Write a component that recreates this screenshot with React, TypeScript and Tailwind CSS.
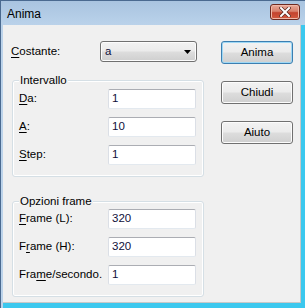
import React from 'react';

const font = { fontFamily: '"Liberation Sans", Arial, sans-serif' };

function Field({ label, value, under }: { label: string; value: string; under: number }) {
  return (
    <div className="flex items-center h-[20px]">
      <span className="pl-[6px] flex-1 text-[11.5px] text-black">
        {label.slice(0, under)}
        <span className="underline underline-offset-[2px]">{label[under]}</span>
        {label.slice(under + 1)}
      </span>
      <div className="w-[88px] h-[20px] mr-[7px] bg-white border border-[#e3e9ef] border-t-[#abadb3] border-l-[#dbdfe6] border-r-[#dbdfe6] rounded-[2px] flex items-center pl-[3px] text-[11.5px] text-[#10103a]">
        {value}
      </div>
    </div>
  );
}

function Group({ title, children, pt }: { title: string; children: React.ReactNode; pt: string }) {
  return (
    <div className={`relative border border-[#d5dfe5] rounded-[3px] shadow-[inset_0_0_0_1px_#ffffff] ${pt} pb-[11px] flex flex-col gap-[8px]`}>
      <span className="absolute -top-[8px] left-[6px] px-[1px] bg-[#f0f0f0] text-[11.5px] text-black leading-[14px]">
        {title}
      </span>
      {children}
    </div>
  );
}

function WinButton({ label, primary }: { label: string; primary?: boolean }) {
  return (
    <div
      className={`w-[72px] h-[23px] rounded-[3px] border flex items-center justify-center text-[11.5px] text-black bg-[linear-gradient(#f2f2f2_0%,#ebebeb_48%,#dddddd_52%,#cfcfcf_100%)] ${
        primary ? 'border-[#3c7fb1] shadow-[inset_0_0_0_1px_#9fd8f5]' : 'border-[#707070] shadow-[inset_0_0_0_1px_#fcfcfc]'
      }`}
    >
      {label}
    </div>
  );
}

export default function App() {
  return (
    <div style={font} className="w-[305px] h-[308px] flex flex-col bg-[#bcd3ea] border-l border-t border-[#4a6a90] overflow-hidden">
      {/* Title bar */}
      <div className="h-[24px] flex items-center justify-between pl-[6px] pr-[5px] bg-[linear-gradient(#a9c4e0,#bad2ea)]">
        <span className="text-[12px] text-black pt-[2px]">Anima</span>
        <div className="w-[30px] h-[16px] mb-[2px] rounded-[3px] border border-[#6e2a20] bg-[linear-gradient(#e9a999_0%,#d8806c_45%,#c4432e_55%,#d35a40_100%)] flex items-center justify-center shadow-[inset_0_0_0_1px_#f0b8a8]">
          <svg width="12" height="10" viewBox="0 0 12 10">
            <path d="M2 1 L10 9 M10 1 L2 9" stroke="#5a2a22" strokeWidth="3.4" strokeLinecap="square" />
            <path d="M2 1 L10 9 M10 1 L2 9" stroke="#ffffff" strokeWidth="2" strokeLinecap="square" />
          </svg>
        </div>
      </div>

      {/* Client area */}
      <div className="flex-1 pl-[2px] flex flex-col">
        <div className="flex-1 flex bg-[#f0f0f0] border-r-[4px] border-b-[5px] border-[#3cc8ee]">
          <div className="flex-1 flex border-r border-b border-[#c8c8c8]">
            {/* Left column */}
            <div className="w-[192px] ml-[9px] flex flex-col pt-[16px]">
              <div className="flex items-center h-[21px]">
                <span className="pl-[-1px] -ml-[1px] flex-1 text-[11.5px] text-black">
                  <span className="underline underline-offset-[2px]">C</span>ostante:
                </span>
                <div className="w-[97px] h-[21px] mr-[7px] rounded-[3px] border border-[#707070] bg-[linear-gradient(#f2f2f2_0%,#ebebeb_48%,#dddddd_52%,#cfcfcf_100%)] flex items-center justify-between pl-[4px] pr-[5px] text-[11.5px] text-[#10103a] shadow-[inset_0_0_0_1px_#fcfcfc]">
                  <span>a</span>
                  <svg width="7" height="4" viewBox="0 0 7 4">
                    <path d="M0 0 H7 L3.5 4 Z" fill="#000000" />
                  </svg>
                </div>
              </div>

              <div className="mt-[18px]">
                <Group title="Intervallo" pt="pt-[8px]">
                  <Field label="Da:" value="1" under={0} />
                  <Field label="A:" value="10" under={0} />
                  <Field label="Step:" value="1" under={0} />
                </Group>
              </div>

              <div className="mt-[24px]">
                <Group title="Opzioni frame" pt="pt-[7px]">
                  <Field label="Frame (L):" value="320" under={0} />
                  <Field label="Frame (H):" value="320" under={1} />
                  <Field label="Frame/secondo." value="1" under={3} />
                </Group>
              </div>
            </div>

            {/* Right column */}
            <div className="ml-[17px] pt-[16px] flex flex-col gap-[17px]">
              <WinButton label="Anima" primary />
              <WinButton label="Chiudi" />
              <WinButton label="Aiuto" />
            </div>
          </div>
        </div>
      </div>
    </div>
  );
}
